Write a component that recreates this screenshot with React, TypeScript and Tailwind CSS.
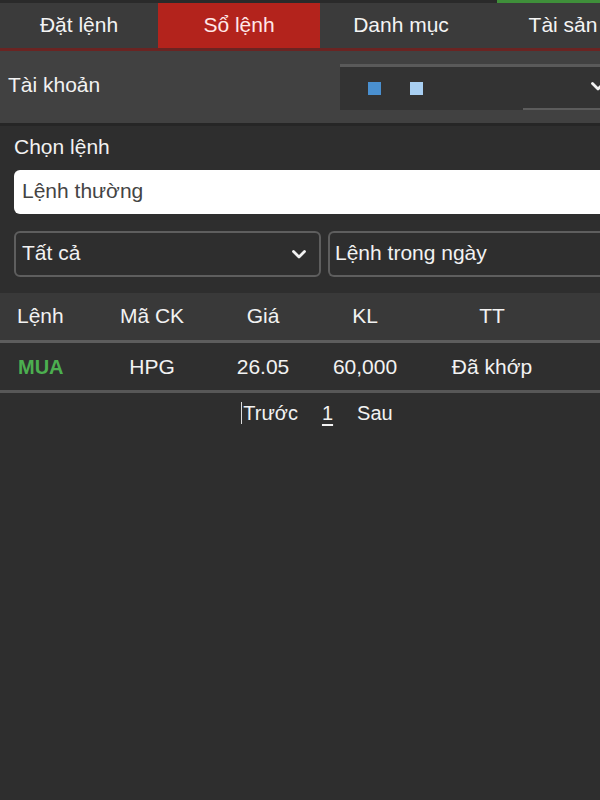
import React from "react";

const Chevron = ({ className = "" }: { className?: string }) => (
  <svg width="16" height="11" viewBox="0 0 16 11" className={className}>
    <path d="M2.5 2.5 L8 8 L13.5 2.5" fill="none" stroke="#f2f2f2" strokeWidth="2.8" strokeLinecap="round" strokeLinejoin="round" />
  </svg>
);

export default function App() {
  const font = { fontFamily: '"Liberation Sans", Arial, sans-serif' };
  return (
    <div className="w-[600px] h-[800px] overflow-hidden bg-[#2e2e2e] text-white" style={font}>
      {/* top strip */}
      <div className="h-[3px] flex bg-[#2a2a2a]">
        <div className="w-[497px]" />
        <div className="flex-1 bg-[#3f8f3a]" />
      </div>
      {/* tabs */}
      <div className="flex h-[45px] bg-[#3b3b3b] whitespace-nowrap text-[21px]">
        <div className="w-[158px] shrink-0 flex items-center justify-center text-[#f4f4f4] pb-[2px]">Đặt lệnh</div>
        <div className="w-[162px] shrink-0 flex items-center justify-center bg-[#b3231c] text-[#ffe8e8] pb-[2px]">Sổ lệnh</div>
        <div className="w-[162px] shrink-0 flex items-center justify-center text-[#f4f4f4] pb-[2px]">Danh mục</div>
        <div className="w-[162px] shrink-0 flex items-center justify-center text-[#f4f4f4] pb-[2px]">Tài sản</div>
      </div>
      <div className="h-[3px] bg-[#6b2422]" />
      {/* account row */}
      <div className="h-[72px] bg-[#414141] flex items-center pl-2">
        <div className="text-[21px] text-[#f2f2f2] flex-1 pb-[4px]">Tài khoản</div>
        <div className="w-[260px] h-[46px] ml-auto bg-[#333333] border-t-[3px] border-[#5a5a5a] flex items-center relative">
          <div className="w-[13px] h-[13px] bg-[#4a90d0] ml-[28px]" />
          <div className="w-[13px] h-[13px] bg-[#a8cff2] ml-[29px]" />
          <Chevron className="absolute right-[-6px] top-[14px]" />
          <div className="absolute bottom-0 left-[183px] right-0 h-[2px] bg-[#5c5c5c]" />
        </div>
      </div>
      <div className="h-[3px] bg-[#262626]" />
      {/* form */}
      <div className="pl-[14px] pt-[8px]">
        <div className="text-[21px] text-[#f2f2f2] leading-[26px]">Chọn lệnh</div>
        <div className="mt-[10px] h-[44px] bg-white rounded-l-[6px] flex items-center pl-2 pb-[2px] text-[21px] text-[#444]">
          Lệnh thường
        </div>
        <div className="mt-[17px] flex gap-[7px]">
          <div className="w-[307px] h-[46px] shrink-0 border-2 border-[#5e5e5e] rounded-[6px] flex items-center justify-between pl-[6px] pr-[12px] text-[21px] text-[#f2f2f2]">
            <span className="pb-[2px]">Tất cả</span>
            <Chevron />
          </div>
          <div className="flex-1 h-[46px] border-2 border-r-0 border-[#5e5e5e] rounded-l-[6px] flex items-center pl-[5px] pb-[2px] text-[21px] text-[#f2f2f2]">
            Lệnh trong ngày
          </div>
        </div>
      </div>
      {/* table */}
      <div className="mt-[16px]">
        <div className="h-[50px] bg-[#393939] border-b-[3px] border-[#5d5d5d] grid grid-cols-[86px_132px_90px_114px_140px] items-center text-[21px] text-[#f2f2f2]">
          <div className="pl-[17px] pb-[2px]">Lệnh</div>
          <div className="text-center pb-[2px]">Mã CK</div>
          <div className="text-center pb-[2px]">Giá</div>
          <div className="text-center pb-[2px]">KL</div>
          <div className="text-center pb-[2px]">TT</div>
        </div>
        <div className="h-[50px] bg-[#2f2f2f] border-b-[3px] border-[#575757] grid grid-cols-[86px_132px_90px_114px_140px] items-center text-[21px] text-[#f2f2f2]">
          <div className="pl-[18px] text-[#4caf50] font-bold text-[20px]">MUA</div>
          <div className="text-center">HPG</div>
          <div className="text-center">26.05</div>
          <div className="text-center">60,000</div>
          <div className="text-center">Đã khớp</div>
        </div>
        <div className="h-[40px] flex items-center justify-center text-[20px] text-[#f2f2f2] pl-[34px]">
          <span className="inline-block w-[1px] h-[22px] bg-[#dcdcdc] mr-[1px]" />
          <span>Trước</span>
          <span className="ml-[24px] underline underline-offset-4">1</span>
          <span className="ml-[24px]">Sau</span>
        </div>
      </div>
    </div>
  );
}
